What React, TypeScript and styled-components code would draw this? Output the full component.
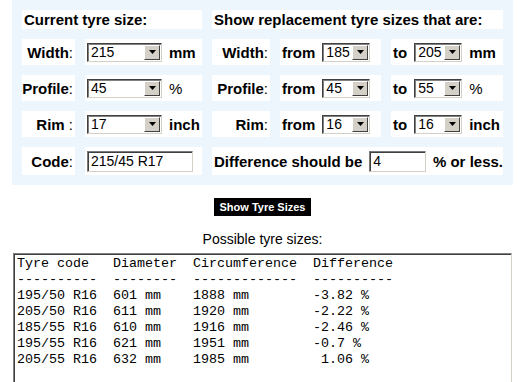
import { Fragment } from "react";
import { createGlobalStyle, styled } from "styled-components";

const GlobalStyle = createGlobalStyle`
  html, body {
    margin: 0;
    padding: 0;
    background: #ffffff;
  }
  body {
    font-family: "Liberation Sans", Arial, sans-serif;
    color: #000;
  }
`;

const Page = styled.div`
  width: 501px;
  padding: 0 8px 0 12px;
`;

const Panel = styled.div`
  background: #edf5fd;
  display: grid;
  grid-template-columns: 53px 117px 58px 101px 112px;
  grid-template-rows: 19px 26px 26px 26px 28px;
  gap: 10px;
  padding: 10px;
`;

const Cell = styled.div<{ $span?: number; $align?: "left" | "right" }>`
  background: #ffffff;
  grid-column: span ${(p) => p.$span ?? 1};
  display: flex;
  align-items: center;
  justify-content: ${(p) => (p.$align === "right" ? "flex-end" : "flex-start")};
  gap: 7px;
  padding: ${(p) => (p.$align === "right" ? "0 2px 0 0" : "0 0 0 2px")};
  font-size: 15px;
  font-weight: bold;
  white-space: nowrap;
`;

const Heading = styled(Cell)`
  font-size: 15px;
`;

const Colon = styled.span`
  font-weight: normal;
`;

const Unit = styled.span<{ $plain?: boolean }>`
  font-weight: ${(p) => (p.$plain ? "normal" : "bold")};
`;

const SelectBox = styled.div<{ $w: number }>`
  width: ${(p) => p.$w}px;
  height: 19px;
  box-sizing: border-box;
  display: flex;
  align-items: stretch;
  border: 1px solid;
  border-color: #404040 #d4d0c8 #d4d0c8 #404040;
  box-shadow: inset 1px 1px 0 #808080;
  background: #fff;
  font-weight: normal;
  font-size: 14px;
`;

const SelectValue = styled.div`
  flex: 1;
  display: flex;
  align-items: center;
  padding-left: 3px;
`;

const DropButton = styled.div`
  width: 16px;
  margin: 1px 1px 1px 0;
  background: #d4d0c8;
  border: 1px solid;
  border-color: #ffffff #404040 #404040 #ffffff;
  box-sizing: border-box;
  display: flex;
  align-items: center;
  justify-content: center;
`;

const TextBox = styled.div<{ $w: number }>`
  width: ${(p) => p.$w}px;
  height: 21px;
  box-sizing: border-box;
  border: 1px solid;
  border-color: #7a7a7a #d4d0c8 #d4d0c8 #7a7a7a;
  box-shadow: inset 1px 1px 0 #404040;
  background: #fff;
  display: flex;
  align-items: center;
  padding-left: 3px;
  font-weight: normal;
  font-size: 14px;
`;

const ButtonRow = styled.div`
  display: flex;
  justify-content: center;
  margin-top: 13px;
`;

const ShowButton = styled.button`
  width: 97px;
  height: 18px;
  background: #000;
  color: #fff;
  border: none;
  padding: 0;
  font-family: "Liberation Sans", Arial, sans-serif;
  font-weight: bold;
  font-size: 11px;
`;

const Caption = styled.div`
  text-align: center;
  font-size: 14px;
  margin-top: 15px;
  line-height: 17px;
`;

const Results = styled.pre`
  margin: 5px 1px 0 1px;
  height: 140px;
  box-sizing: border-box;
  border: 1px solid;
  border-color: #808080 #d4d0c8 #d4d0c8 #808080;
  box-shadow: inset 1px 1px 0 #404040;
  padding: 2px 3px;
  font-family: "Liberation Mono", "Courier New", monospace;
  font-size: 13.33px;
  line-height: 16px;
  color: #000;
  overflow: hidden;
`;

function Select({ value, width }: { value: string; width: number }) {
  return (
    <SelectBox $w={width}>
      <SelectValue>{value}</SelectValue>
      <DropButton>
        <svg width="7" height="4" viewBox="0 0 7 4">
          <path d="M0 0H7L3.5 4Z" fill="#000" />
        </svg>
      </DropButton>
    </SelectBox>
  );
}

const rows = [
  ["Width", "215", "mm", "185", "205", "mm"],
  ["Profile", "45", "%", "45", "55", "%"],
  ["Rim ", "17", "inch", "16", "16", "inch"],
];

const results = [
  "Tyre code   Diameter  Circumference  Difference",
  "----------  --------  -------------  ----------",
  "195/50 R16  601 mm    1888 mm        -3.82 %",
  "205/50 R16  611 mm    1920 mm        -2.22 %",
  "185/55 R16  610 mm    1916 mm        -2.46 %",
  "195/55 R16  621 mm    1951 mm        -0.7 %",
  "205/55 R16  632 mm    1985 mm         1.06 %",
].join("\n");

export default function App() {
  return (
    <Page>
      <GlobalStyle />
      <Panel>
        <Heading $span={2}>Current tyre size:</Heading>
        <Heading $span={3}>Show replacement tyre sizes that are:</Heading>
        {rows.map(([label, cur, unit, from, to, unit2]) => (
          <Fragment key={label}>
            <Cell $align="right">
              <span>
                {label}
                <Colon>:</Colon>
              </span>
            </Cell>
            <Cell>
              <Select value={cur} width={75} />
              <Unit $plain={unit === "%"}>{unit}</Unit>
            </Cell>
            <Cell $align="right">
              <span>
                {label.trim()}
                <Colon>:</Colon>
              </span>
            </Cell>
            <Cell>
              from
              <Select value={from} width={48} />
            </Cell>
            <Cell>
              to
              <Select value={to} width={48} />
              <Unit $plain={unit2 === "%"}>{unit2}</Unit>
            </Cell>
          </Fragment>
        ))}
        <Cell $align="right">
          <span>
            Code<Colon>:</Colon>
          </span>
        </Cell>
        <Cell>
          <TextBox $w={106}>215/45 R17</TextBox>
        </Cell>
        <Cell $span={3}>
          Difference should be
          <TextBox $w={59}>4</TextBox>
          % or less.
        </Cell>
      </Panel>
      <ButtonRow>
        <ShowButton>Show Tyre Sizes</ShowButton>
      </ButtonRow>
      <Caption>Possible tyre sizes:</Caption>
      <Results>{results}</Results>
    </Page>
  );
}
